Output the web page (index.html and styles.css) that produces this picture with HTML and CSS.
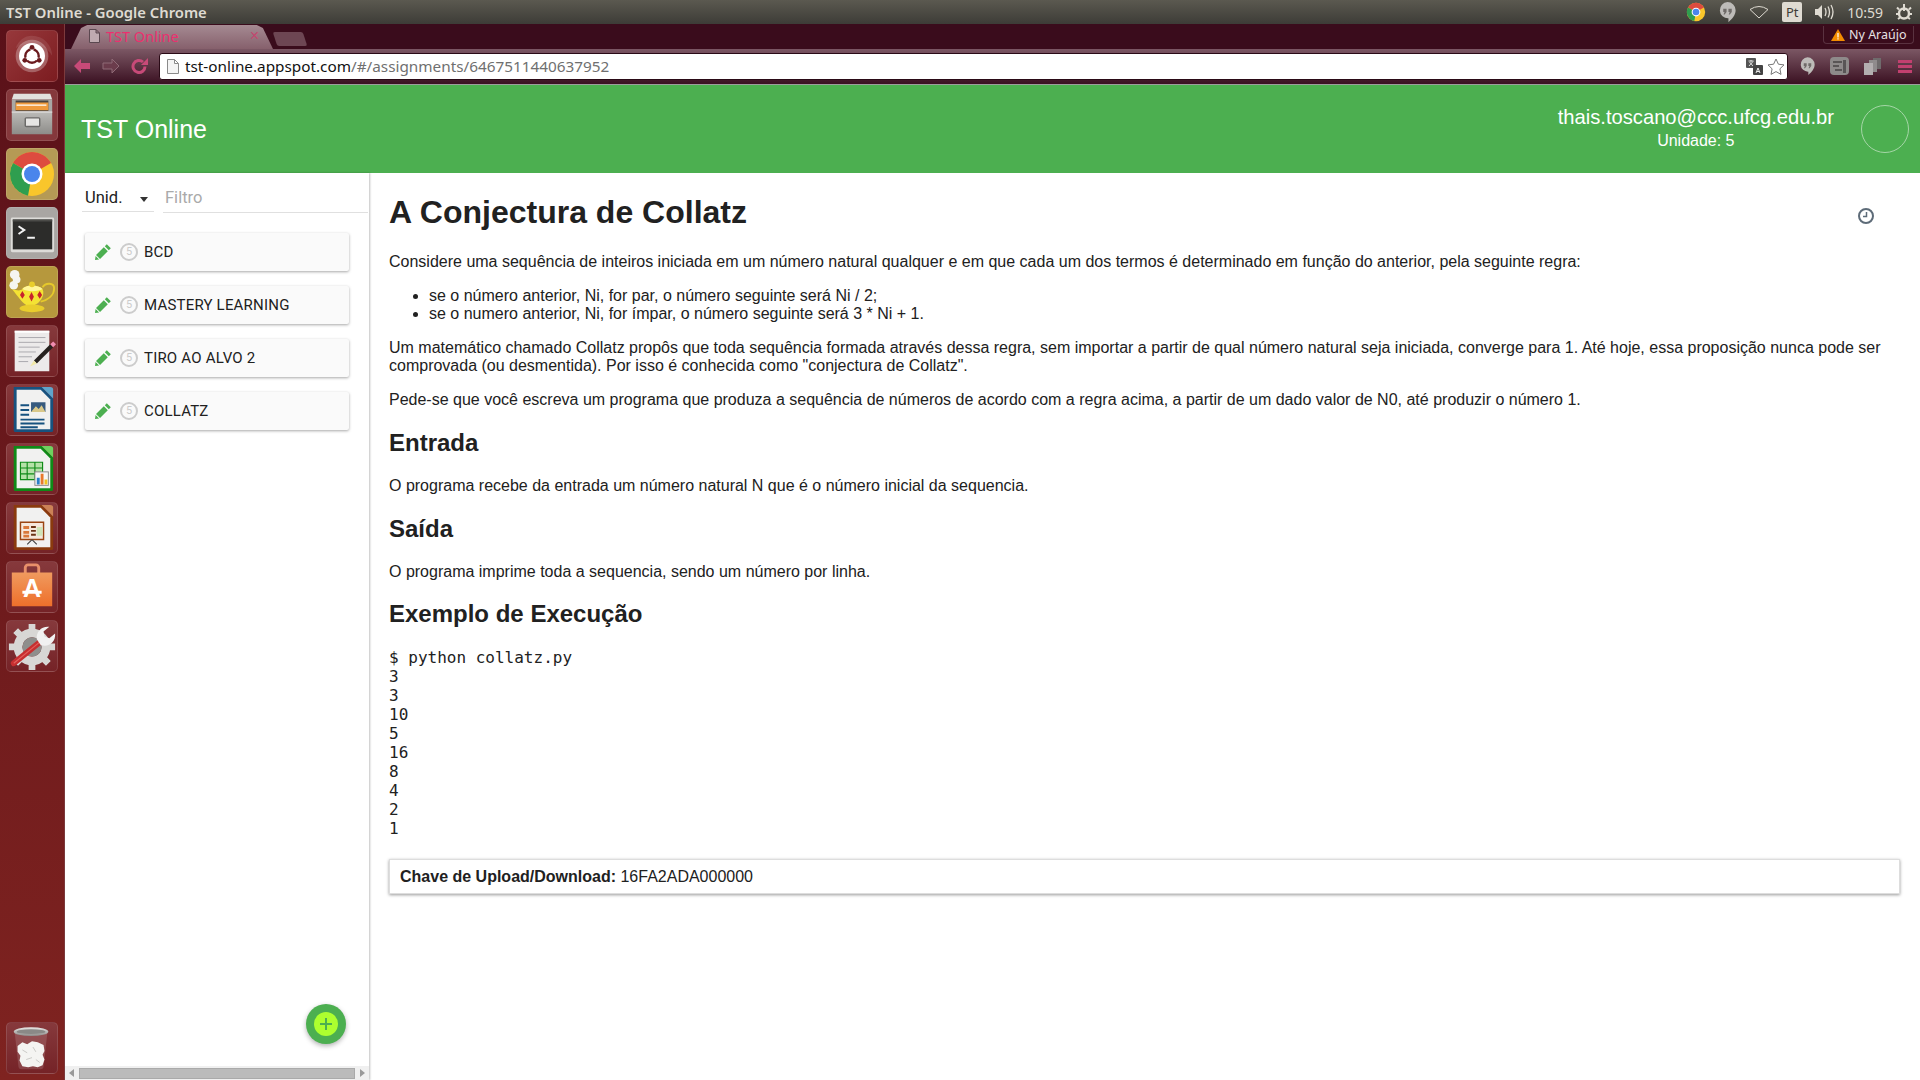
FILE: index.html
```html
<!DOCTYPE html>
<html lang="pt">
<head>
    <meta charset="UTF-8">
    <title>TST Online - Google Chrome</title>
    <link rel="stylesheet" href="styles.css">
</head>
<body>
    <svg class="defs" width="0" height="0">
        <symbol id="pencil" viewBox="0 0 16 16">
            <path d="M11.8.2l4 4-2 2-4-4zM8.800 3.200l4 4-7.800 7.800-4-4zM.6 11.900l3.500 3.500-4.100.6z" fill="#4caf50"/>
        </symbol>
        <symbol id="bubble" viewBox="0 0 18 22">
            <path d="M9 0a8.6 8.6 0 0 1 8.6 8.6c0 5-3.6 9-7.6 12.6v-4a8.6 8.6 0 0 1-1-17.2z" fill="#bdbbb8"/>
            <path d="M4.500 7h3.500v3.500l-2 2.500h-1.200l1-2.500h-1.300zM10 7h3.500v3.500l-2 2.500h-1.200l1-2.500h-1.300z" fill="#6f6b68"/>
        </symbol>
        <symbol id="chrome" viewBox="0 0 48 48">
            <circle cx="24" cy="24" r="22" fill="#f9c62b"/>
            <path d="M24 24 5 13A22 22 0 0 1 43 13z" fill="#dd4b3f"/>
            <path d="M24 24 5 13a22 22 0 0 0 15 32.600z" fill="#2f9e4f"/>
            <circle cx="24" cy="24" r="10.500" fill="#fff"/>
            <circle cx="24" cy="24" r="8" fill="#4a85ec"/>
        </symbol>
    </svg>

    <div class="titlebar">
        <span class="window-title">TST Online - Google Chrome</span>
        <div class="tray">
            <svg class="tray-chrome" width="20" height="20"><use href="#chrome"/></svg>
            <svg class="tray-bubble" width="17" height="21"><use href="#bubble"/></svg>
            <svg class="tray-wifi" width="20" height="14" viewBox="0 0 20 14"><path d="M1 4.500Q10-1.500 19 4.500L10 13z" fill="none" stroke="#dfdbd2" stroke-width="1"/></svg>
            <span class="tray-lang">Pt</span>
            <svg class="tray-volume" width="21" height="16" viewBox="0 0 21 16"><path d="M1 5h3l4-4v14l-4-4H1z" fill="#dfdbd2"/><path d="M11 4q2 4 0 8M14 2.500q3 5.500 0 11M17 1q4 7 0 14" fill="none" stroke="#dfdbd2" stroke-width="1.300"/></svg>
            <span class="tray-time">10:59</span>
            <svg class="tray-gear" width="16" height="17" viewBox="0 0 16 17"><circle cx="8" cy="9.500" r="5" fill="none" stroke="#dfdbd2" stroke-width="2.500"/><path d="M7 0h2v7H7z" fill="#dfdbd2"/><path d="M1 3.500l2 2M15 3.500l-2 2M0 10h2M14 10h2M2 15l2-1.500M14 15l-2-1.500" stroke="#dfdbd2" stroke-width="2"/></svg>
        </div>
    </div>

    <div class="desktop">
        <nav class="launcher">
            <div class="launcher-apps">
                <div class="tile tile-home">
                    <svg viewBox="0 0 52 52"><path d="M26 5a21 21 0 0 1 21 21c-6-12-24-18-38-8 3-8 9-13 17-13z" fill="#fff" opacity=".1"/><circle cx="26" cy="26" r="17" fill="#f5efef" opacity=".3"/><circle cx="26" cy="26" r="13.500" fill="#fff"/><circle cx="26" cy="26" r="7" fill="none" stroke="#6a1a1e" stroke-width="2.500"/><path d="M26 21v-3M21.500 28.500l-3 1.500M30.500 28.500l3 1.500" stroke="#fff" stroke-width="3"/><circle cx="26" cy="17" r="2.500" fill="#6a1a1e"/><circle cx="18.500" cy="30.500" r="2.500" fill="#6a1a1e"/><circle cx="33.500" cy="30.500" r="2.500" fill="#6a1a1e"/></svg>
                </div>
                <div class="tile tile-files">
                    <svg viewBox="0 0 52 52"><defs><linearGradient id="cabinet" x1="0" y1="0" x2="0" y2="1"><stop offset="0" stop-color="#bdbcb9"/><stop offset="1" stop-color="#8d8c89"/></linearGradient></defs><path d="M7 4h38l2 6H5z" fill="#e2e1df"/><path d="M5 10h42v12H5z" fill="#a9a8a6"/><path d="M9 11h34v11H9z" fill="#4a4441"/><path d="M9 13h34v8H9z" fill="#ef9a3c"/><path d="M10 15h31v1.500H10z" fill="#fff"/><path d="M5 22h42v24H5z" fill="url(#cabinet)"/><path d="M5 22h42v2H5z" fill="#d2d1cf"/><rect x="19" y="29" width="15" height="9" rx="1" fill="#e6e5e3" stroke="#6b6a68" stroke-width="1.500"/></svg>
                </div>
                <div class="tile tile-chrome">
                    <svg viewBox="0 0 52 52"><use href="#chrome" x="1" y="1" width="50" height="50"/></svg>
                </div>
                <div class="tile tile-terminal">
                    <svg viewBox="0 0 52 52"><rect x="4" y="10" width="45" height="36" rx="1.500" fill="#dddcd9"/><rect x="6" y="12" width="41" height="31" fill="#2c2c2a"/><path d="M6 12h41v2H6z" fill="#4b4b48"/><path d="M12 19l6 4-6 4" fill="none" stroke="#f2f2f2" stroke-width="2"/><path d="M21 30h8v2h-8z" fill="#f2f2f2"/></svg>
                </div>
                <div class="tile tile-lamp">
                    <svg viewBox="0 0 52 52"><circle cx="8" cy="8" r="5" fill="#f5f5f0"/><circle cx="10" cy="13" r="4" fill="#f5f5f0"/><circle cx="7" cy="19" r="4.500" fill="#f5f5f0"/><path d="M37 21c3-5 12-5 12 1 0 7-6 12-14 14" fill="none" stroke="#e6c92b" stroke-width="2"/><path d="M5 23c6 2 9 2 11 0 3-5 17-5 21 0 3 7-3 15-9 17h-7c-6-3-9-9-16-17z" fill="#f4e234"/><ellipse cx="26" cy="43" rx="13" ry="4" fill="#e9cd2c"/><path d="M16 23c3-5 17-5 21 0-5 3-16 3-21 0z" fill="#fff59a"/><circle cx="26" cy="18" r="3" fill="#e9cd2c"/><path d="M16 25l2.500 4-2.500 4-2.500-4zM25.500 26l2.500 5-2.500 5-2.500-5zM34 25l2.500 4-2.500 4-2.500-4z" fill="#c8222c"/></svg>
                </div>
                <div class="tile tile-plain">
                    <svg viewBox="0 0 52 52"><path d="M8 5h36v42H8z" fill="#eceaea"/><path d="M8 5h36v2H8z" fill="#fff"/><path d="M12 12h28M12 17h28M12 22h22M12 27h18M12 32h14M12 37h10" stroke="#a9a8ad" stroke-width="1"/><path d="M28 36l17-17 3 3-17 17z" fill="#26221f"/><path d="M45 19l3-3 3 3-3 3z" fill="#f08cb0"/><path d="M28 36l3 3-7 3z" fill="#f1e9a8"/></svg>
                </div>
                <div class="tile tile-plain">
                    <svg viewBox="0 0 52 52"><path d="M7 2h29l12 12v33a2 2 0 0 1-2 2H9a2 2 0 0 1-2-2z" fill="#17527f"/><path d="M36 2l12 12V5a3 3 0 0 0-3-3z" fill="#5fa5cb"/><path d="M10 5h25l10 10v31H10z" fill="#f1f1f0"/><path d="M14 20h9v2h-9zM14 25h9v2h-9zM14 30h9v2h-9zM14 35h25v2H14zM14 39h25v2H14zM14 43h18v2H14z" fill="#17527f"/><path d="M25 18h15v10H25z" fill="#375a7e"/><path d="M25 28l5-6 3 3 3-4 4 7z" fill="#d9c88a"/></svg>
                </div>
                <div class="tile tile-plain">
                    <svg viewBox="0 0 52 52"><path d="M7 2h29l12 12v33a2 2 0 0 1-2 2H9a2 2 0 0 1-2-2z" fill="#0f8a17"/><path d="M36 2l12 12V5a3 3 0 0 0-3-3z" fill="#6fd25f"/><path d="M10 5h25l10 10v31H10z" fill="#f1f1f0"/><path d="M14 19h23v18H14z" fill="#b5e2a8"/><path d="M14 19h23v18H14zM14 25h23M14 31h23M21 19v18M29 19v18" fill="none" stroke="#0f8a17" stroke-width="1.200"/><rect x="29" y="29" width="14" height="14" fill="#f6f6f6" stroke="#888"/><path d="M31 35h3v7h-3z" fill="#2a7fc8"/><path d="M35 31h3v11h-3z" fill="#e8782c"/><path d="M39 37h3v5h-3z" fill="#f0c21f"/></svg>
                </div>
                <div class="tile tile-plain">
                    <svg viewBox="0 0 52 52"><path d="M7 2h29l12 12v33a2 2 0 0 1-2 2H9a2 2 0 0 1-2-2z" fill="#8a3a0e"/><path d="M36 2l12 12V5a3 3 0 0 0-3-3z" fill="#cc8256"/><path d="M10 5h25l10 10v31H10z" fill="#f1f1f0"/><path d="M14 20h24v18H14z" fill="#f6e8dc" stroke="#9a4412" stroke-width="1.500"/><path d="M17 24h6v3h-6zM17 29h6v3h-6zM17 33h6v3h-6z" fill="#d9783a"/><path d="M25 24h5v2h-5zM25 28h5v2h-5zM25 32h5v2h-5z" fill="#6a3214"/><path d="M31 25h6v9h-6z" fill="#cfe4b8"/><path d="M26 38l-5 5M26 38l5 5" stroke="#444" stroke-width="1.200"/></svg>
                </div>
                <div class="tile tile-plain">
                    <svg viewBox="0 0 52 52"><defs><linearGradient id="bag" x1="0" y1="0" x2="0" y2="1"><stop offset="0" stop-color="#f09a5e"/><stop offset="1" stop-color="#ee6f2b"/></linearGradient></defs><path d="M19 12V6a3 3 0 0 1 3-3h8a3 3 0 0 1 3 3v6" fill="none" stroke="#e8906a" stroke-width="3"/><path d="M5 11h42v35H5z" fill="url(#bag)"/><text class="bag-letter" x="26" y="36" text-anchor="middle">A</text><path d="M16 30h20v3H16z" fill="#fff"/></svg>
                </div>
                <div class="tile tile-plain">
                    <svg viewBox="0 0 52 52"><circle cx="26" cy="27" r="14.500" fill="none" stroke="#d8d7d5" stroke-width="9"/><g stroke="#d8d7d5" stroke-width="7"><path d="M26 3v7M26 44v7M2 27h7M43 27h7M9 10l5 5M38 39l5 5M9 44l5-5"/></g><circle cx="26" cy="27" r="10" fill="#8f8e8c"/><path d="M7 44l27-22" stroke="#c62f30" stroke-width="6" stroke-linecap="round"/><path d="M7 44l27-22" stroke="#e2605c" stroke-width="1.200"/><path d="M31 19c-1-8 5-14 13-13l-6 5 1 5 5 2 6-5c1 9-7 15-15 12z" fill="#f1f1f1"/></svg>
                </div>
            </div>
            <div class="tile tile-plain">
                <svg viewBox="0 0 52 52"><defs><linearGradient id="rim" x1="0" y1="0" x2="0" y2="1"><stop offset="0" stop-color="#e8e8e6"/><stop offset="1" stop-color="#8d8c8a"/></linearGradient></defs><path d="M8 10h34l-4 36a3 3 0 0 1-3 2H15a3 3 0 0 1-3-2z" fill="#fff" opacity=".14"/><path d="M11 24l5-4 5 2 5-3 6 1 6 3 1 6-2 4 2 5-2 6-5 2-5-1-5 1-6-1-3-6 1-5-3-4z" fill="#f4f4f2"/><path d="M16 28l5 3M27 25l3 5M20 38l6-2M30 38l4 3" stroke="#c9c9c6" stroke-width="1" fill="none"/><ellipse cx="25" cy="9" rx="18" ry="4.500" fill="url(#rim)"/><ellipse cx="25" cy="9" rx="15" ry="2.500" fill="#8a8987"/></svg>
            </div>
        </nav>

        <div class="browser">
            <div class="tabstrip">
                <div class="tab">
                    <svg class="tab-doc" width="11" height="14" viewBox="0 0 11 14"><path d="M.5.500h6.500l3.500 3.500v9.500H.5zM7 .5V4h3.500" fill="#bfaab0" stroke="#5b4850"/></svg>
                    <span class="tab-title">TST Online</span>
                    <span class="tab-close">×</span>
                </div>
                <div class="new-tab"></div>
                <div class="profile">
                    <svg width="14" height="12" viewBox="0 0 14 12"><path d="M7 0l7 12H0z" fill="#f28c00"/><path d="M6.400 4h1.200v4.500H6.400zM6.400 9.300h1.200v1.200H6.400z" fill="#fff"/></svg>
                    <span>Ny Araújo</span>
                </div>
            </div>
            <div class="toolbar">
                <div class="nav-buttons">
                    <svg width="18" height="16" viewBox="0 0 18 16"><path d="M8 1L1 8l7 7v-4h9V5H8z" fill="#c74a78"/></svg>
                    <svg width="18" height="16" viewBox="0 0 18 16"><path d="M10 1l7 7-7 7v-4H1V5h9z" fill="#6b3c4c" stroke="#8f6a76"/></svg>
                    <svg width="17" height="17" viewBox="0 0 17 17"><path d="M14 8.500a6 6 0 1 1-2-4.500" fill="none" stroke="#c74a78" stroke-width="3"/><path d="M10 7h7V0z" fill="#c74a78"/></svg>
                </div>
                <div class="omnibox">
                    <svg width="12" height="15" viewBox="0 0 12 15"><path d="M.5.500h7l4 4v10H.5zM7.500.5v4h4" fill="#f4f4f4" stroke="#8a8a8a"/></svg>
                    <span class="url"><b>tst-online.appspot.com</b>/#/assignments/6467511440637952</span>
                    <svg class="translate" width="17" height="17" viewBox="0 0 17 17"><rect width="10" height="10" rx="1" fill="#555"/><rect x="7" y="7" width="10" height="10" rx="1" fill="#444"/><path d="M2.500 3h5M5 2v1.500M3 8l4-4.500M3.500 4l3.500 4" stroke="#fff" stroke-width=".8" fill="none"/><path d="M10 15l2-5 2 5M11 13.500h2" stroke="#fff" fill="none" stroke-width=".9"/></svg>
                    <svg width="18" height="17" viewBox="0 0 18 17"><path d="M9 1l2.400 5.200 5.600.7-4.100 3.900 1.100 5.600L9 13.600l-5 2.800 1.100-5.600L1 6.900l5.600-.7z" fill="#fff" stroke="#777"/></svg>
                </div>
                <div class="extensions">
                    <svg width="15" height="19"><use href="#bubble"/></svg>
                    <svg width="19" height="18" viewBox="0 0 19 18"><rect width="19" height="18" rx="4" fill="#8e8a8a"/><path d="M3 5h9M3 9h6M5 13h7" stroke="#595556" stroke-width="2"/><path d="M13 3h3v13h-3z" fill="#595556"/></svg>
                    <svg width="17" height="17" viewBox="0 0 17 17"><path d="M9 0h8v11H9z" fill="#6f6b6c"/><path d="M5 2h8v12H5z" fill="#8f8b8c"/><path d="M0 5h9v12H0z" fill="#b3afb0"/></svg>
                    <div class="menu-icon"><i></i><i></i><i></i></div>
                </div>
            </div>

            <header class="app-header">
                <div class="app-name">TST Online</div>
                <div class="user-info">
                    <div class="user-email">thais.toscano@ccc.ufcg.edu.br</div>
                    <div class="user-unit">Unidade: 5</div>
                </div>
                <div class="avatar"></div>
            </header>

            <div class="app-body">
                <aside class="sidebar">
                    <div class="filters">
                        <div class="unit-select"><span>Unid.</span><i class="caret"></i></div>
                        <div class="filter-input">Filtro</div>
                    </div>
                    <ul class="assignments">
                        <li class="assignment">
                            <svg class="pencil" width="16" height="16"><use href="#pencil"/></svg>
                            <span class="level">5</span>
                            <span class="assignment-name">BCD</span>
                        </li>
                        <li class="assignment">
                            <svg class="pencil" width="16" height="16"><use href="#pencil"/></svg>
                            <span class="level">5</span>
                            <span class="assignment-name">MASTERY LEARNING</span>
                        </li>
                        <li class="assignment">
                            <svg class="pencil" width="16" height="16"><use href="#pencil"/></svg>
                            <span class="level">5</span>
                            <span class="assignment-name">TIRO AO ALVO 2</span>
                        </li>
                        <li class="assignment">
                            <svg class="pencil" width="16" height="16"><use href="#pencil"/></svg>
                            <span class="level">5</span>
                            <span class="assignment-name">COLLATZ</span>
                        </li>
                    </ul>
                    <button class="fab"><span class="fab-inner">
                        <svg width="14" height="14" viewBox="0 0 14 14"><path d="M6 1h2v5h5v2H8v5H6V8H1V6h5z" fill="#4caf50"/></svg>
                    </span></button>
                    <div class="hscroll">
                        <i class="arrow-left"></i>
                        <div class="hscroll-thumb"></div>
                        <i class="arrow-right"></i>
                    </div>
                </aside>

                <main class="assignment-view">
                    <svg class="clock" width="16" height="16" viewBox="0 0 16 16"><circle cx="8" cy="8" r="7" fill="#fff" stroke="#5d6b78" stroke-width="2"/><path d="M8.500 4v4.500H5" fill="none" stroke="#5d6b78" stroke-width="1.500"/></svg>
                    <h1>A Conjectura de Collatz</h1>
                    <p>Considere uma sequência de inteiros iniciada em um número natural qualquer e em que cada um dos termos é determinado em função do anterior, pela seguinte regra:</p>
                    <ul>
                        <li>se o número anterior, Ni, for par, o número seguinte será Ni / 2;</li>
                        <li>se o numero anterior, Ni, for ímpar, o número seguinte será 3 * Ni + 1.</li>
                    </ul>
                    <p>Um matemático chamado Collatz propôs que toda sequência formada através dessa regra, sem importar a partir de qual número natural seja iniciada, converge para 1. Até hoje, essa proposição nunca pode ser comprovada (ou desmentida). Por isso é conhecida como "conjectura de Collatz".</p>
                    <p>Pede-se que você escreva um programa que produza a sequência de números de acordo com a regra acima, a partir de um dado valor de N0, até produzir o número 1.</p>
                    <h2>Entrada</h2>
                    <p>O programa recebe da entrada um número natural N que é o número inicial da sequencia.</p>
                    <h2>Saída</h2>
                    <p>O programa imprime toda a sequencia, sendo um número por linha.</p>
                    <h2>Exemplo de Execução</h2>
                    <pre>$ python collatz.py
3
3
10
5
16
8
4
2
1</pre>
                    <div class="upload-key"><b>Chave de Upload/Download:</b> 16FA2ADA000000</div>
                </main>
            </div>
        </div>
    </div>
</body>
</html>
```

FILE: styles.css
```css
* {
    box-sizing: border-box;
}
html, body {
    margin: 0;
    height: 100%;
    overflow: hidden;
}
body {
    display: flex;
    flex-direction: column;
    font-family: "Liberation Sans", Arial, sans-serif;
    font-size: 16px;
    color: #212121;
    background: #fff;
}
.defs {
    position: absolute;
}

/* window title bar */
.titlebar {
    height: 24px;
    flex: none;
    display: flex;
    align-items: center;
    justify-content: space-between;
    padding-left: 6px;
    background: linear-gradient(#5b5950, #3d3c37);
}
.window-title {
    font-family: "Noto Sans", sans-serif;
    font-size: 14.8px;
    font-weight: 600;
    color: #dfdbd2;
}
.tray {
    display: flex;
    align-items: center;
    height: 24px;
}
.tray-chrome { margin-right: 13px; }
.tray-bubble { margin-right: 13px; }
.tray-wifi { margin-right: 13px; }
.tray-lang {
    width: 20px;
    height: 20px;
    background: #dfdbd2;
    color: #3d3c37;
    font-family: "Noto Sans", sans-serif;
    font-size: 13px;
    line-height: 20px;
    text-align: center;
    border-radius: 2px;
    margin-right: 12px;
}
.tray-volume { margin-right: 12px; }
.tray-time {
    font-family: "Noto Sans", sans-serif;
    font-size: 14px;
    color: #dfdbd2;
    margin-right: 13px;
}
.tray-gear { margin-right: 8px; }

.desktop {
    flex: 1;
    display: flex;
    min-height: 0;
}

/* unity launcher */
.launcher {
    width: 65px;
    flex: none;
    display: flex;
    flex-direction: column;
    justify-content: space-between;
    padding: 6px 7px 6px 6px;
    background: linear-gradient(#5a1119, #7f2320);
    border-right: 1px solid #7d3a3c;
}
.launcher-apps {
    display: flex;
    flex-direction: column;
    gap: 7px;
}
.tile {
    width: 52px;
    height: 52px;
    border-radius: 5px;
    border: 1px solid rgba(255, 255, 255, 0.12);
    overflow: hidden;
}
.tile svg {
    display: block;
    width: 50px;
    height: 50px;
}
.tile-home { background: linear-gradient(135deg, #97383b, #7c1c20); }
.tile-files { background: #85383c; }
.tile-chrome { background: #b59a55; }
.tile-terminal { background: #a9a6a3; }
.tile-lamp { background: #b6983d; }
.tile-plain { background: linear-gradient(#86393c, #752327); }
.bag-letter {
    font-family: "Liberation Sans", sans-serif;
    font-size: 26px;
    font-weight: bold;
    fill: #fff;
}

.browser {
    flex: 1;
    min-width: 0;
    display: flex;
    flex-direction: column;
}

/* chrome tabs and toolbar */
.tabstrip {
    height: 25px;
    flex: none;
    position: relative;
    display: flex;
    align-items: flex-end;
    padding-left: 6px;
    background: #3a0c1c;
}
.tab {
    width: 202px;
    height: 24px;
    display: flex;
    align-items: center;
    padding: 0 14px 2px 18px;
    background: linear-gradient(#a58a92, #86606c);
    border-radius: 7px 7px 0 0;
    clip-path: polygon(0 100%, 5% 12%, 8% 0, 92% 0, 95% 12%, 100% 100%);
}
.tab-doc {
    flex: none;
    margin-right: 6px;
}
.tab-title {
    flex: 1;
    font-family: "Noto Sans", sans-serif;
    font-size: 14.5px;
    color: #ec2f6e;
}
.tab-close {
    font-size: 16px;
    color: #c2476f;
}
.new-tab {
    width: 30px;
    height: 14px;
    margin: 0 0 3px 2px;
    background: #6d4653;
    border-radius: 2px;
    transform: skewX(18deg);
}
.profile {
    position: absolute;
    right: 6px;
    top: 2px;
    width: 91px;
    height: 18px;
    display: flex;
    align-items: center;
    gap: 4px;
    padding-left: 7px;
    border: 1px solid #5a3240;
    border-top: none;
    border-radius: 0 0 4px 4px;
    font-family: "Noto Sans", sans-serif;
    font-size: 12.500px;
    color: #e8e2e4;
}
.toolbar {
    height: 36px;
    flex: none;
    display: flex;
    align-items: center;
    padding-bottom: 1px;
    background: linear-gradient(#7b5764, #3a1021);
    border-bottom: 1px solid #9c9c9c;
}
.nav-buttons {
    width: 94px;
    flex: none;
    display: flex;
    align-items: center;
    gap: 11px;
    padding-left: 8px;
}
.omnibox {
    width: 1629px;
    height: 27px;
    flex: none;
    display: flex;
    align-items: center;
    padding: 0 2px 0 7px;
    background: #fff;
    border: 1px solid #2a0a16;
    border-radius: 3px;
}
.url {
    flex: 1;
    margin-left: 6px;
    font-family: "Noto Sans", sans-serif;
    font-size: 15.3px;
    color: #6f6f6f;
}
.url b {
    font-weight: 400;
    color: #111;
}
.translate {
    margin-right: 4px;
}
.extensions {
    flex: 1;
    display: flex;
    align-items: center;
    gap: 15px;
    padding-left: 12px;
}
.menu-icon {
    display: flex;
    flex-direction: column;
    gap: 2px;
    width: 14px;
    margin-left: 2px;
}
.menu-icon i {
    height: 3px;
    background: #c2406f;
}

/* app header */
.app-header {
    height: 88px;
    flex: none;
    display: flex;
    align-items: center;
    background: #4caf50;
    color: #fff;
    padding: 0 11px 0 16px;
}
.app-name {
    flex: 1;
    font-size: 25px;
}
.user-info {
    text-align: center;
    padding-bottom: 3px;
    margin-right: 27px;
}
.user-email {
    font-size: 20.2px;
}
.user-unit {
    margin-top: 3px;
}
.avatar {
    width: 48px;
    height: 48px;
    border-radius: 50%;
    border: 1px solid #a5d6a7;
}

.app-body {
    flex: 1;
    min-height: 0;
    display: flex;
}

/* assignments column */
.sidebar {
    width: 304px;
    flex: none;
    position: relative;
    display: flex;
    flex-direction: column;
    box-shadow: 1px 0 2px rgba(0, 0, 0, 0.25);
}
.filters {
    display: flex;
    gap: 9px;
    padding: 0 1px 0 17px;
    height: 41px;
    flex: none;
}
.unit-select {
    width: 72px;
    height: 39px;
    display: flex;
    align-items: center;
    justify-content: space-between;
    padding: 11px 6px 0 3px;
    font-family: Roboto, sans-serif;
    font-size: 16.5px;
    border-bottom: 1px solid #e0e0e0;
}
.caret {
    width: 0;
    height: 0;
    margin-top: 4px;
    border: 4.500px solid transparent;
    border-top: 5px solid #333;
    border-bottom: none;
}
.filter-input {
    flex: 1;
    height: 40px;
    padding: 15px 0 0 2px;
    font-family: Roboto, sans-serif;
    font-size: 16.5px;
    color: #aaa;
    border-bottom: 1px solid #e0e0e0;
}
.assignments {
    flex: 1;
    list-style: none;
    margin: 0;
    padding: 19px 20px 0 20px;
    display: flex;
    flex-direction: column;
    gap: 15px;
}
.assignment {
    height: 38px;
    display: flex;
    align-items: center;
    padding-left: 10px;
    background: #fafafa;
    border-radius: 2px;
    box-shadow: 0 1px 3px rgba(0, 0, 0, 0.35);
}
.pencil {
    flex: none;
    margin-right: 9px;
}
.level {
    width: 18px;
    height: 18px;
    flex: none;
    border: 2px solid #ccc;
    border-radius: 50%;
    font-family: Roboto, sans-serif;
    font-size: 11px;
    line-height: 14px;
    text-align: center;
    color: #ccc;
    margin-right: 6px;
}
.assignment-name {
    font-family: Roboto, sans-serif;
    font-size: 15px;
    letter-spacing: 0.2px;
    color: #212121;
}
.fab {
    position: absolute;
    right: 23px;
    bottom: 36px;
    width: 40px;
    height: 40px;
    padding: 0;
    border: none;
    border-radius: 50%;
    background: #4caf50;
    display: flex;
    align-items: center;
    justify-content: center;
    box-shadow: 0 2px 5px rgba(0, 0, 0, 0.3);
}
.fab-inner {
    width: 24px;
    height: 24px;
    border-radius: 50%;
    background: #adff2f;
    display: flex;
    align-items: center;
    justify-content: center;
}
.hscroll {
    height: 14px;
    flex: none;
    display: flex;
    align-items: center;
    gap: 5px;
    padding: 0 4px;
    background: #f0f0f0;
}
.hscroll-thumb {
    flex: 1;
    height: 11px;
    background: #bbb;
    border: 1px solid #aaa;
}
.arrow-left, .arrow-right {
    width: 0;
    height: 0;
    border: 4px solid transparent;
}
.arrow-left {
    border-left: none;
    border-right: 5px solid #999;
}
.arrow-right {
    border-right: none;
    border-left: 5px solid #999;
}

/* assignment text */
.assignment-view {
    flex: 1;
    min-width: 0;
    position: relative;
    padding: 0 20px 0 20px;
}
.clock {
    position: absolute;
    right: 46px;
    top: 35px;
}
.assignment-view pre {
    font-family: "DejaVu Sans Mono", monospace;
    font-size: 16px;
    line-height: 19px;
}
.upload-key {
    height: 35px;
    margin-top: 21px;
    padding: 8px 10px;
    border: 1px solid #ddd;
    box-shadow: 0 1px 3px rgba(0, 0, 0, 0.4);
}
```
